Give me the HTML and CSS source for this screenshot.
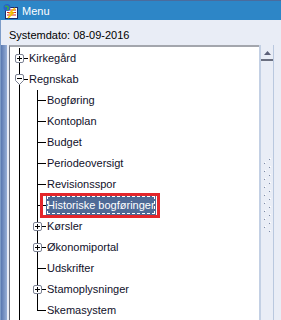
FILE: index.html
```html
<!DOCTYPE html>
<html lang="da">
<head>
<meta charset="utf-8">
<title>Menu</title>
<link rel="stylesheet" href="styles.css">
</head>
<body>
<div class="window">
  <div class="titlebar">
    <svg class="appicon" width="16" height="16" viewBox="0 0 16 16">
      <rect x="3.5" y="4.5" width="12" height="11" fill="#fff" stroke="#1d2b6b"/>
      <path d="M5 7h9M5 9.5h9M5 12h9" stroke="#d62020" stroke-width="1"/>
      <path d="M13 5l-5 5h3l-5 5" stroke="#f2c200" stroke-width="1.6" fill="none"/>
      <circle cx="5" cy="4.5" r="3.5" fill="#2a62c8"/>
      <path d="M3 3.5q2-1 3 0.5t-1 3" stroke="#3cb043" stroke-width="1.4" fill="none"/>
    </svg>
    <span class="title">Menu</span>
  </div>
  <div class="main">
    <div class="sysdate">Systemdato: 08-09-2016</div>
    <div class="treearea">
      <div class="tree">
        <div class="row"><div class="cell t"><svg class="exp" viewBox="0 0 9 9"><rect x=".5" y=".5" width="8" height="8" rx="1.5" fill="#fff" stroke="#7c8294"/><path d="M2 4.5h5M4.5 2v5" stroke="#000"/></svg></div><span class="label">Kirkegård</span></div>
        <div class="row"><div class="cell t"><svg class="exp shield" viewBox="0 0 9 11"><path d="M.5 2q0-1.5 1.5-1.5h5q1.5 0 1.5 1.5v4.5l-4 4-4-4z" fill="#fff" stroke="#7c8294"/><path d="M2 4.5h5" stroke="#000"/></svg></div><span class="label">Regnskab</span></div>
        <div class="row"><div class="cell v"></div><div class="cell t"></div><span class="label">Bogføring</span></div>
        <div class="row"><div class="cell v"></div><div class="cell t"></div><span class="label">Kontoplan</span></div>
        <div class="row"><div class="cell v"></div><div class="cell t"></div><span class="label">Budget</span></div>
        <div class="row"><div class="cell v"></div><div class="cell t"></div><span class="label">Periodeoversigt</span></div>
        <div class="row"><div class="cell v"></div><div class="cell t"></div><span class="label">Revisionsspor</span></div>
        <div class="row"><div class="cell v"></div><div class="cell t"></div><span class="label sel">Historiske bogføringer</span></div>
        <div class="row"><div class="cell v"></div><div class="cell t"><svg class="exp" viewBox="0 0 9 9"><rect x=".5" y=".5" width="8" height="8" rx="1.5" fill="#fff" stroke="#7c8294"/><path d="M2 4.5h5M4.5 2v5" stroke="#000"/></svg></div><span class="label">Kørsler</span></div>
        <div class="row"><div class="cell v"></div><div class="cell t"><svg class="exp" viewBox="0 0 9 9"><rect x=".5" y=".5" width="8" height="8" rx="1.5" fill="#fff" stroke="#7c8294"/><path d="M2 4.5h5M4.5 2v5" stroke="#000"/></svg></div><span class="label">Økonomiportal</span></div>
        <div class="row"><div class="cell v"></div><div class="cell t"></div><span class="label">Udskrifter</span></div>
        <div class="row"><div class="cell v"></div><div class="cell t"><svg class="exp" viewBox="0 0 9 9"><rect x=".5" y=".5" width="8" height="8" rx="1.5" fill="#fff" stroke="#7c8294"/><path d="M2 4.5h5M4.5 2v5" stroke="#000"/></svg></div><span class="label">Stamoplysninger</span></div>
        <div class="row"><div class="cell v"></div><div class="cell l"></div><span class="label">Skemasystem</span></div>
      </div>
      <div class="scrollbar">
        <div class="sb-up"><svg width="7" height="4" viewBox="0 0 7 4"><path d="M3.5 0L7 4H0z" fill="#5c6078"/></svg></div>
        <div class="sb-track">
          <svg class="grip" width="12" height="76" viewBox="0 0 12 76">
            <defs>
              <pattern id="gp" width="12" height="8" patternUnits="userSpaceOnUse">
                <rect x="9" y="0" width="1" height="1" fill="#ffffff"/>
                <rect x="8" y="1" width="1" height="1" fill="#7d8aa6"/>
                <rect x="4" y="4" width="1" height="1" fill="#ffffff"/>
                <rect x="3" y="5" width="1" height="1" fill="#7d8aa6"/>
              </pattern>
            </defs>
            <rect width="12" height="76" fill="url(#gp)"/>
          </svg>
        </div>
      </div>
      <div class="rstrip"></div>
    </div>
  </div>
</div>
</body>
</html>
```
FILE: styles.css
```css
* { box-sizing: border-box; }
html, body { margin: 0; padding: 0; }
body {
  width: 281px;
  height: 320px;
  overflow: hidden;
  background: #e9edf6;
  font-family: "Liberation Sans", Arial, sans-serif;
  font-size: 11px;
  color: #000;
}
.window { display: flex; flex-direction: column; height: 320px; }
.titlebar {
  height: 20px;
  flex: none;
  background: #2d86c7;
  border-top: 1px solid #4a6c9e;
  display: flex;
  align-items: center;
  padding-left: 2px;
  gap: 4px;
}
.appicon { flex: none; }
.title { color: #fff; font-size: 11px; }
.main {
  flex: 1;
  display: flex;
  flex-direction: column;
  border-left: 1px solid #7d9cc8;
  min-height: 0;
}
.sysdate {
  height: 25px;
  flex: none;
  padding: 5px 0 0 8px;
  line-height: 20px;
}
.treearea {
  flex: 1;
  display: flex;
  min-height: 0;
  padding-left: 8px;
  background: linear-gradient(to right, #5878b0 0, #98afd6 6px, #e9edf6 6px) 0 0 / 7px 100% no-repeat;
}
.tree {
  width: 250px;
  flex: none;
  background: #fff;
  border-top: 2px solid #a3a6ad;
  border-left: 1px solid #6f7480;
  padding-top: 1px;
  overflow: hidden;
}
.row { display: flex; height: 21px; }
.cell { width: 18px; flex: none; }
.cell.v { background: linear-gradient(#000, #000) 9px 0 / 1px 100% no-repeat; }
.cell.t {
  background:
    linear-gradient(#000, #000) 9px 0 / 1px 100% no-repeat,
    linear-gradient(#000, #000) 9px 10px / 9px 1px no-repeat;
}
.cell.l {
  background:
    linear-gradient(#000, #000) 9px 0 / 1px 11px no-repeat,
    linear-gradient(#000, #000) 9px 10px / 9px 1px no-repeat;
}
.exp { display: block; width: 9px; height: 9px; margin: 6px 0 0 5px; }
.exp.shield { height: 11px; margin-top: 5px; }
.label {
  height: 20px;
  line-height: 21px;
  padding: 0 1px;
  white-space: nowrap;
  color: #10102a;
}
.label.sel {
  position: relative;
  background: #4e6a96;
  color: #fff;
  outline: 1px dashed #fff;
  outline-offset: -2px;
}
.label.sel::after {
  content: "";
  position: absolute;
  left: -6px;
  top: -2px;
  right: -4px;
  bottom: -3px;
  border: 3px solid #e3262b;
}
.scrollbar {
  width: 15px;
  flex: none;
  border-left: 2px solid #c3d0e4;
  border-right: 1px solid #b9c8df;
  padding-top: 1px;
  display: flex;
  flex-direction: column;
}
.sb-up {
  height: 15px;
  flex: none;
  border-bottom: 2px solid #6a6f80;
  display: flex;
  justify-content: center;
  align-items: center;
}
.sb-track { flex: 1; }
.grip { display: block; margin-top: 97px; }
.rstrip { flex: 1; }
```
